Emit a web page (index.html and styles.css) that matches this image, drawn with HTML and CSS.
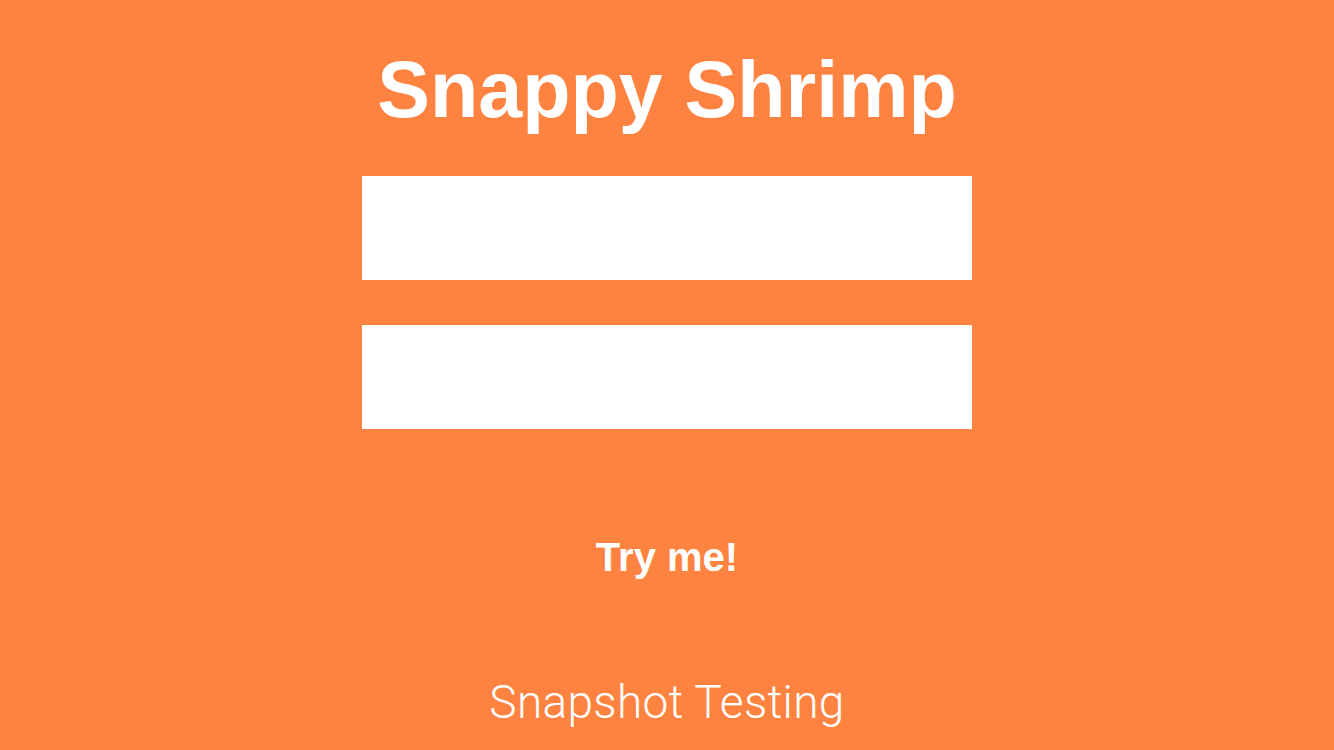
FILE: index.html
```html
<!DOCTYPE html>
<html lang="en">
<head>
<meta charset="utf-8">
<title>Snappy Shrimp</title>
<link rel="stylesheet" href="styles.css">
</head>
<body>
<main class="screen">
  <h1 class="title">Snappy Shrimp</h1>
  <div class="fields">
    <input class="field" type="text" aria-label="Username">
    <input class="field" type="password" aria-label="Password">
  </div>
  <button class="try" type="button">Try me!</button>
  <p class="footer">Snapshot Testing</p>
</main>
</body>
</html>
```
FILE: styles.css
```css
html, body {
  margin: 0;
  padding: 0;
  background: #ff8340;
}

.screen {
  width: 1334px;
  height: 750px;
  display: flex;
  flex-direction: column;
  align-items: center;
  overflow: hidden;
  color: #ffffff;
  font-family: "Liberation Sans", Arial, sans-serif;
}

.title {
  margin: 50px 0 0 0;
  font-size: 79px;
  line-height: 80px;
  font-weight: 700;
  letter-spacing: 0;
}

.fields {
  margin-top: 46px;
  display: flex;
  flex-direction: column;
  gap: 45px;
}

.field {
  display: block;
  box-sizing: border-box;
  width: 610px;
  height: 104px;
  margin: 0;
  padding: 0 16px;
  border: none;
  outline: none;
  background: #ffffff;
  font-family: inherit;
  font-size: 30px;
}

.try {
  margin-top: 108px;
  padding: 0;
  border: none;
  background: transparent;
  color: #ffffff;
  font-family: "Liberation Sans", Arial, sans-serif;
  font-weight: 700;
  font-size: 40px;
  line-height: 40px;
  cursor: pointer;
}

.footer {
  margin: 102px 0 0 0;
  font-family: Roboto, "Liberation Sans", sans-serif;
  font-weight: 300;
  font-size: 46px;
  line-height: 46px;
  letter-spacing: 0.3px;
}
```
